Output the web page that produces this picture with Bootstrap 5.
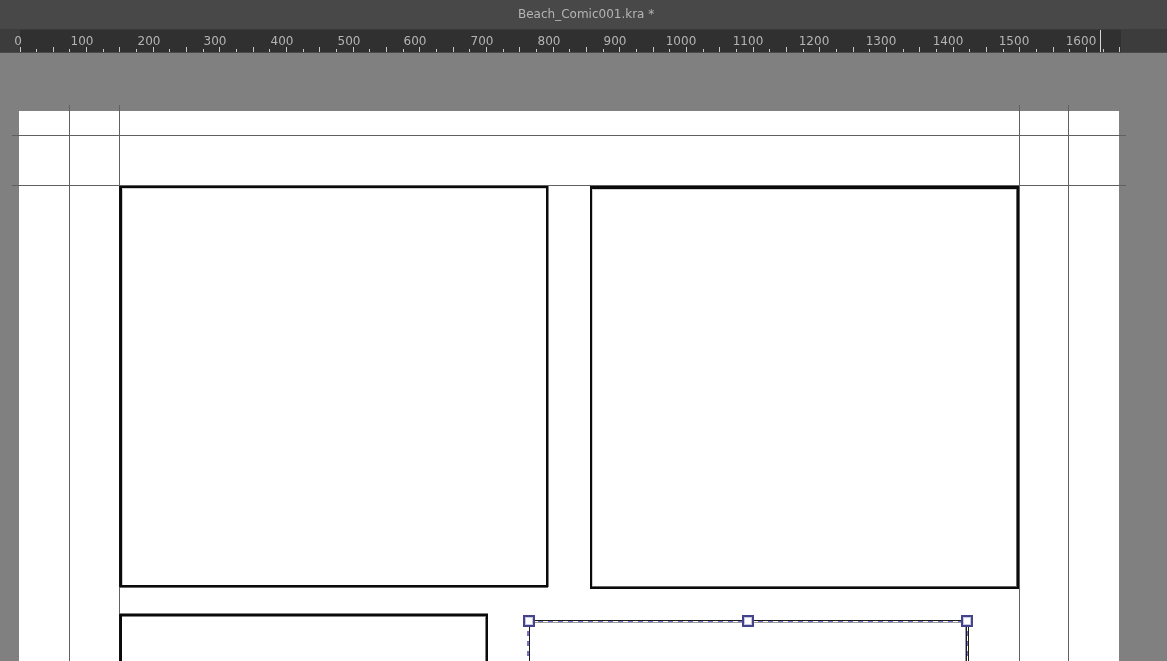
<!DOCTYPE html>
<html lang="en">
<head>
    <meta charset="UTF-8">
    <meta name="viewport" content="width=device-width, initial-scale=1.0">
    <title>Beach_Comic001.kra *</title>
    <link rel="stylesheet" href="https://cdn.jsdelivr.net/npm/bootstrap@5.3.0/dist/css/bootstrap.min.css">
    <style>
        html, body {
            height: 100%;
            overflow: hidden;
            background: #808080;
        }
        .title-strip {
            height: 29px;
            background: #484848;
            color: #b4b4b4;
            font: 12px "DejaVu Sans", sans-serif;
            padding-left: 5px;
            padding-bottom: 1px;
        }
        .title-text {
            will-change: transform;
        }
        .ruler-strip {
            height: 24px;
            background: #3c3c3c;
            border-bottom: 1px solid #4a4a4a;
        }
        .ruler-inner {
            width: 1101px;
            margin-left: 20px;
            height: 23px;
            background: #303030;
            box-shadow: inset 0 1px 0 #3a3a3a;
        }
        .ruler-label {
            top: 2px;
            color: #b4b4b4;
            font: 12px/20px "DejaVu Sans", sans-serif;
            transform: translateX(-50%);
            will-change: transform;
        }
        .ruler-ticks {
            left: 0;
            top: 0;
        }
        .work-area {
            height: 608px;
            overflow: hidden;
        }
        .paper {
            left: 19px;
            top: 58px;
            width: 1100px;
            height: 560px;
            background: #fff;
        }
        .guide-v {
            top: 52px;
            bottom: 0;
            width: 1px;
            background: #606060;
        }
        .guide-h {
            left: 12px;
            width: 1114px;
            height: 1px;
            background: #606060;
        }
        .comic-panel {
            border: 2px solid #0a0a0a;
        }
        .panel-a {
            left: 120px;
            top: 133px;
            width: 428px;
            height: 401px;
            box-shadow: -1px 0 0 #111, 0 1px 0 #666, 1px 0 0 #808080, inset 1px 1px 0 #d0d0d0;
        }
        .panel-b {
            left: 590px;
            top: 133px;
            width: 429px;
            height: 403px;
            border-top-width: 3px;
            box-shadow: inset -1px -1px 0 #666, inset 1px 1px 0 #d0d0d0;
        }
        .panel-c {
            left: 120px;
            top: 561px;
            width: 368px;
            height: 200px;
            box-shadow: -1px 0 0 #111, 0 -1px 0 #808080, inset -1px 1px 0 #808080;
        }
        .picked-panel {
            left: 528px;
            top: 567px;
            width: 441px;
            height: 200px;
            border-top: 1px solid #1c1c1c;
        }
        .ants-h, .ants-v {
            position: absolute;
        }
        .ants-h {
            left: 0;
            right: 0;
            top: 0;
            height: 1px;
            background: repeating-linear-gradient(90deg, #7272d2 0 5px, #fff 5px 10px);
            box-shadow: 0 1px 0 #999;
        }
        .ants-v {
            top: 0;
            bottom: 0;
            left: -1px;
            width: 2px;
            background: repeating-linear-gradient(180deg, #7272d2 0 5px, #fff 5px 10px);
            box-shadow: 1px 0 0 #1c1c1c;
        }
        .ants-right {
            left: auto;
            right: 1px;
            width: 1px;
            box-shadow: 1px 0 0 #1c1c1c, -1px 0 0 #1c1c1c, -2px 0 0 #999;
        }
        .grab-handle {
            top: 562px;
            width: 12px;
            height: 12px;
            background: #fff;
            border: 2px solid #44448c;
            box-shadow: inset 0 0 0 1px #c8c8e0;
        }
    </style>
</head>
<body>
    <div class="title-strip d-flex align-items-center justify-content-center"><span class="title-text">Beach_Comic001.kra *</span></div>
    <div class="ruler-strip">
        <div class="ruler-inner position-relative" id="ruler"></div>
    </div>
    <div class="work-area position-relative">
        <div class="paper position-absolute"></div>

        <div class="guide-v position-absolute" style="left: 69px"></div>
        <div class="guide-v position-absolute" style="left: 119px"></div>
        <div class="guide-v position-absolute" style="left: 1019px"></div>
        <div class="guide-v position-absolute" style="left: 1068px"></div>
        <div class="guide-h position-absolute" style="top: 82px"></div>
        <div class="guide-h position-absolute" style="top: 132px"></div>

        <div class="comic-panel panel-a position-absolute"></div>
        <div class="comic-panel panel-b position-absolute"></div>
        <div class="comic-panel panel-c position-absolute"></div>

        <div class="picked-panel position-absolute">
            <div class="ants-h"></div>
            <div class="ants-v"></div>
            <div class="ants-v ants-right"></div>
        </div>

        <div class="grab-handle position-absolute" style="left: 523px"></div>
        <div class="grab-handle position-absolute" style="left: 742px"></div>
        <div class="grab-handle position-absolute" style="left: 961px"></div>
    </div>

    <script>
        // ruler: 100 units = 66.65px, tick every 25 units
        const ruler = document.getElementById('ruler');
        const scale = 0.6665;
        const startX = -0.5; // relative to ruler-inner
        let ticks = '';
        for (let u = 0; u <= 1650; u += 25) {
            const x = Math.round(startX + u * scale) + 0.5;
            const tall = u % 50 === 0;
            ticks += `<line x1="${x}" x2="${x}" y1="${tall ? 18 : 20}" y2="23" stroke="#c8c8c8"/>`;
        }
        ticks += '<line x1="1080.5" x2="1080.5" y1="1" y2="23" stroke="#d8d8d8"/>';
        ruler.innerHTML = `<svg class="ruler-ticks position-absolute" width="1101" height="23">${ticks}</svg>`;
        for (let u = 0; u <= 1600; u += 100) {
            const text = String(u);
            const el = document.createElement('span');
            el.className = 'ruler-label position-absolute';
            el.textContent = text;
            el.style.left = (startX + u * scale - (1 + text.length)) + 'px';
            ruler.appendChild(el);
        }
    </script>
    <script src="https://cdn.jsdelivr.net/npm/bootstrap@5.3.0/dist/js/bootstrap.bundle.min.js"></script>
</body>
</html>
